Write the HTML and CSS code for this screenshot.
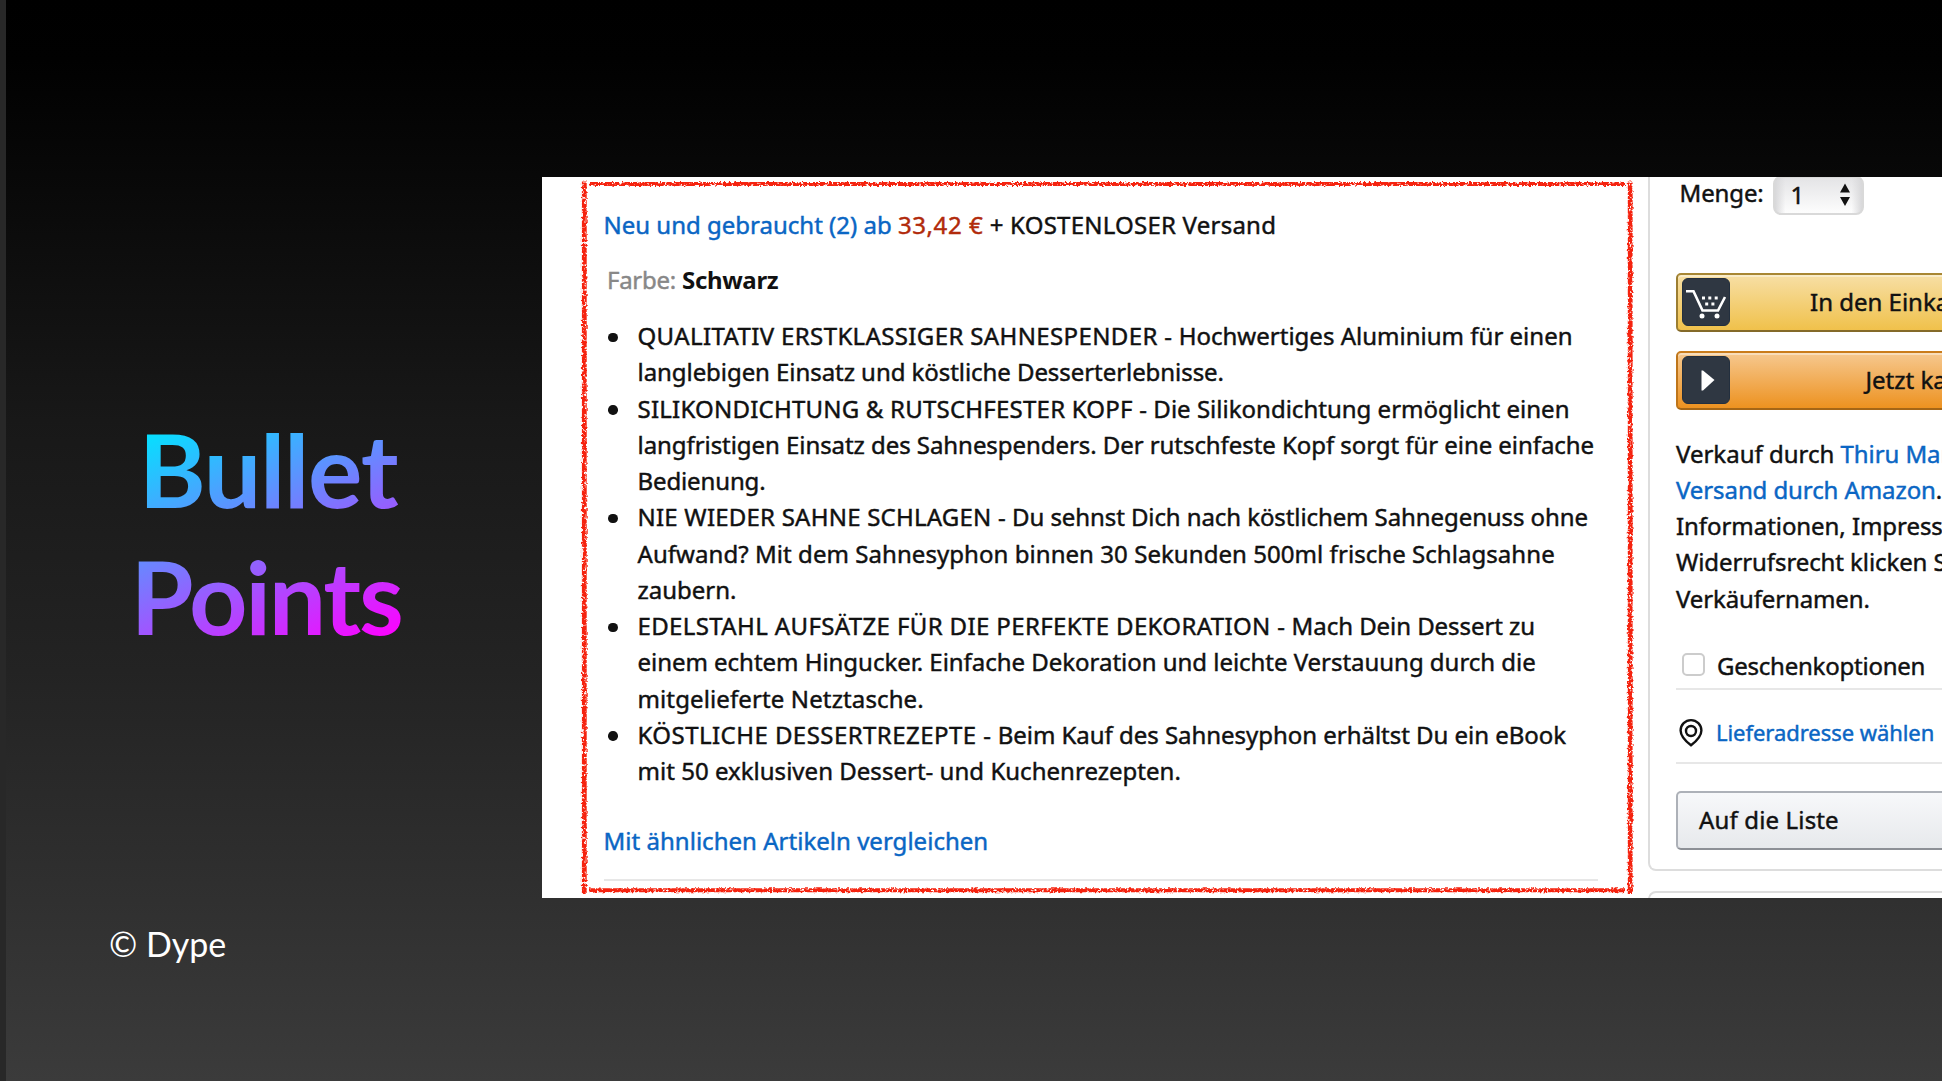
FILE: index.html
```html
<!DOCTYPE html>
<html lang="de">
<head>
<meta charset="utf-8">
<title>Bullet Points</title>
<link rel="stylesheet" href="styles.css">
</head>
<body>
<main class="slide">
  <section class="intro">
    <h1 class="title"><span class="title-a">Bullet</span><br><span class="title-b">Points</span></h1>
    <p class="copyright">© Dype</p>
  </section>
  <section class="shot">
    <article class="product">
      <p class="offer"><a class="link">Neu und gebraucht (2) ab</a> <span class="price">33,42 €</span> <span class="ship">+ KOSTENLOSER Versand</span></p>
      <p class="variant"><span class="label">Farbe:</span> <b>Schwarz</b></p>
      <ul class="bullets">
        <li><span class="caps">QUALITATIV ERSTKLASSIGER SAHNESPENDER -</span><span class="w2"> Hochwertiges Aluminium für einen</span><br><span class="w1">langlebigen Einsatz und köstliche Desserterlebnisse.</span></li>
        <li><span class="caps2">SILIKONDICHTUNG &amp; RUTSCHFESTER KOPF -</span><span class="w2"> Die Silikondichtung ermöglicht einen</span><br><span class="w1">langfristigen Einsatz des Sahnespenders. Der rutschfeste Kopf sorgt für eine einfache</span><br><span class="w0">Bedienung.</span></li>
        <li><span class="caps2">NIE WIEDER SAHNE SCHLAGEN -</span><span class="w1b"> Du sehnst Dich nach köstlichem Sahnegenuss ohne</span><br><span class="w3">Aufwand? Mit dem Sahnesyphon binnen 30 Sekunden 500ml frische Schlagsahne</span><br>zaubern.</li>
        <li><span class="caps">EDELSTAHL AUFSÄTZE FÜR DIE PERFEKTE DEKORATION -</span><span class="w1"> Mach Dein Dessert zu</span><br><span class="w2n">einem echtem Hingucker. Einfache Dekoration und leichte Verstauung durch die</span><br><span class="w4">mitgelieferte Netztasche.</span></li>
        <li><span class="caps3">KÖSTLICHE DESSERTREZEPTE -</span><span class="w2n"> Beim Kauf des Sahnesyphon erhältst Du ein eBook</span><br><span class="w2b">mit 50 exklusiven Dessert- und Kuchenrezepten.</span></li>
      </ul>
      <p class="compare"><a class="link w2b">Mit ähnlichen Artikeln vergleichen</a></p>
    </article>
    <aside class="side">
      <div class="buybox">
        <div class="qty"><span class="w0">Menge:</span>
          <span class="select">1<svg class="arrows" width="12" height="24" viewBox="0 0 12 24"><path d="M6 0.500L11 9.500H1zM6 23L1 14H11z" fill="#111"/></svg></span>
        </div>
        <div class="btn cart">
          <span class="tile"><svg width="48" height="48" viewBox="0 0 48 48"><path d="M4 13.300h7.500l9 19.200h15.500l7-13.500" fill="none" stroke="#fff" stroke-width="2.600"/><g fill="#fff"><circle cx="20" cy="38" r="2.500"/><circle cx="35" cy="38" r="2.500"/><path d="M20 18.500h3v3h-3zM26.300 18.500h3v3h-3zM32.700 18.500h3v3h-3zM23.200 24.500h3v3h-3zM29.400 24.500h3v3h-3z"/></g></svg></span>
          <span class="cart-text">In den Einka</span>
        </div>
        <div class="btn buy">
          <span class="tile"><svg width="48" height="48" viewBox="0 0 48 48"><path d="M19.500 14.500h1.500L32.500 24 21 34.500h-1.500z" fill="#fff"/></svg></span>
          <span class="buy-text">Jetzt ka</span>
        </div>
        <p class="seller">Verkauf durch <a class="link w1b">Thiru Mar</a><br><a class="link w1b">Versand durch Amazon</a>.<br><span class="w1">Informationen, Impressu</span><br><span class="w1b">Widerrufsrecht klicken S</span><br><span class="w0">Verkäufernamen.</span></p>
        <div class="gift"><span class="check"></span><span class="w0b">Geschenkoptionen</span></div>
        <div class="address"><svg width="26" height="30" viewBox="0 0 26 30" fill="none" stroke="#111" stroke-width="2.400"><path d="M13 27.300C10 25 2.600 18.500 2.600 12.500a10.400 10.400 0 0 1 20.800 0C23.400 18.500 16 25 13 27.300z"/><circle cx="13" cy="13" r="5"/></svg><a class="link">Lieferadresse wählen</a></div>
        <div class="list-btn">Auf die Liste</div>
      </div>
      <div class="nextbox"></div>
    </aside>
    <svg class="frame" width="1400" height="721" viewBox="0 0 1400 721">
      <filter id="chalk" filterUnits="userSpaceOnUse" x="0" y="0" width="1400" height="721" color-interpolation-filters="sRGB">
        <feTurbulence type="fractalNoise" baseFrequency="0.4" numOctaves="2" seed="4" result="n"/>
        <feDisplacementMap in="SourceGraphic" in2="n" scale="4" xChannelSelector="R" yChannelSelector="G" result="d"/>
        <feColorMatrix in="n" type="matrix" values="0 0 0 0 0  0 0 0 0 0  0 0 0 0 0  0 0 6 0 -1.500" result="m"/>
        <feComposite in="d" in2="m" operator="in"/>
      </filter>
      <g filter="url(#chalk)" stroke="#f5230f">
        <path d="M42.300 4.500V717M1088.200 4.500V717" stroke-width="4.800"/>
        <path d="M47.500 7.100H1083M47.500 713.200H1083" stroke-width="4"/>
      </g>
    </svg>
  </section>
</main>
</body>
</html>
```
FILE: styles.css
```css
* { box-sizing: border-box; }
body { margin: 0; overflow: hidden; background: #000; }
p, h1, ul { margin: 0; padding: 0; }

.slide {
  width: 1942px;
  height: 1081px;
  display: grid;
  grid-template-columns: 536px 1400px;
  border-left: 6px solid #282828;
  background: linear-gradient(180deg, #000 0, #010101 60px, #080808 175px, #181818 420px, #232323 670px, #303030 900px, #3b3b3b 1081px) padding-box;
}

.intro { padding-top: 406px; color: #fff; }
.title {
  width: 282px;
  margin-left: 121px;
  text-align: center;
  white-space: nowrap;
  font: 700 102px/126.700px Lato, sans-serif;
  background: linear-gradient(155deg, #00e5ff 8%, #ff00ff 93%);
  -webkit-background-clip: text;
  background-clip: text;
  color: transparent;
}
.title-a { letter-spacing: -1.300px; }
.title-b { letter-spacing: -2.300px; margin-left: -4px; }
.copyright { margin: 263px 0 0 103px; font: 400 34px/44px Lato, sans-serif; }

.shot {
  position: relative;
  margin-top: 177px;
  height: 721px;
  overflow: hidden;
  display: grid;
  grid-template-columns: 1105.500px 294.500px;
  background: #fff;
  color: #111;
  font: 400 24px/36.250px "Noto Sans", sans-serif;
  -webkit-text-stroke: 0.450px currentColor;
  white-space: nowrap;
}
.link { color: #0a66c4; }

.product { padding: 30px 0 0 61.500px; width: 1056px; }
.product p { height: 36px; line-height: 36px; }
.price { color: #b12a0b; letter-spacing: 0.600px; }
.ship { letter-spacing: 0.230px; }
.variant { margin-top: 19px; padding-left: 3.500px; }
.variant .label { color: #888; letter-spacing: -0.300px; }
.variant b { letter-spacing: -0.350px; -webkit-text-stroke: 0; }
.bullets { margin-top: 20px; padding-left: 34px; list-style: none; }
.bullets li::before {
  content: "";
  float: left;
  width: 9.500px;
  height: 9.500px;
  margin: 14.500px 0 0 -29.500px;
  border-radius: 50%;
  background: #111;
}
.product .compare { margin-top: 34px; height: 57.500px; border-bottom: 2px solid #e7e7e7; }

/* Per-line tracking */
.w0 { letter-spacing: -0.130px; }
.w0b { letter-spacing: -0.230px; }
.w1 { letter-spacing: -0.060px; }
.w1b { letter-spacing: -0.090px; }
.w2 { letter-spacing: 0.010px; }
.w2n { letter-spacing: -0.030px; }
.w2b { letter-spacing: 0.025px; }
.w3 { letter-spacing: 0.055px; }
.w4 { letter-spacing: 0.120px; }
.caps { letter-spacing: 0.370px; }
.caps2 { letter-spacing: 0.220px; }
.caps3 { letter-spacing: 0.450px; }

.buybox {
  width: 320px;
  height: 693.500px;
  padding-left: 26.500px;
  border: 2px solid #ddd;
  border-top: 0;
  border-radius: 0 0 8px 8px;
}
.nextbox { width: 320px; height: 40px; margin-top: 20px; border: 2px solid #ddd; border-radius: 8px; }

.qty { height: 38px; display: flex; align-items: flex-start; padding-left: 3.500px; line-height: 32px; }
.select {
  width: 91px;
  height: 39px;
  margin: -1px 0 0 9px;
  padding: 0 11px 1px 16px;
  display: flex;
  align-items: center;
  justify-content: space-between;
  border: 2px solid #d9d9d9;
  border-radius: 8px;
  background: linear-gradient(90deg, #d8d8da 0, #d8d8da00 12%, #d8d8da00 88%, #d8d8da 100%), linear-gradient(#e4e4e6, #fdfdfd);
}
.btn {
  width: 330px;
  height: 59px;
  padding: 0 4px;
  display: flex;
  align-items: center;
  border: 2px solid;
  border-radius: 5px;
  box-shadow: inset 0 2px 0 #ffffff66;
}
.cart { margin-top: 57.500px; border-color: #a88734 #9c7e31 #846a29; background: linear-gradient(#f7dfa5, #f0c14b); }
.buy { margin-top: 19px; border-color: #ca7c1b #be751a #a56616; background: linear-gradient(#f6c88f, #ed9220); }
.tile { width: 48px; height: 48px; border: 1px solid #232f3e; border-radius: 6px; background: #2f3742; }
.tile svg { display: block; margin: -1px; }
.cart-text { margin-left: 80px; }
.buy-text { margin-left: 135.500px; }
.seller { margin-top: 26px; }
.gift { height: 73px; padding: 31px 0 0 6px; display: flex; align-items: flex-start; gap: 12px; border-bottom: 2px solid #e7e7e7; }
.check { width: 23px; height: 23px; margin-top: 5px; border: 2px solid #ccc; border-radius: 5px; background: #fff; }
.address { height: 74.500px; padding: 13px 0 0 2px; display: flex; align-items: center; gap: 12px; border-bottom: 2px solid #e7e7e7; font-size: 22px; }
.address a { letter-spacing: -0.050px; }
.list-btn {
  width: 330px;
  height: 59px;
  margin-top: 27px;
  padding-left: 21px;
  line-height: 53px;
  border: 2px solid #adb1b8;
  border-bottom-color: #8d9096;
  border-radius: 5px;
  background: linear-gradient(#f7f8fa, #e7e9ec);
  letter-spacing: 0.150px;
}

.frame { position: absolute; left: 0; top: 0; }
```
